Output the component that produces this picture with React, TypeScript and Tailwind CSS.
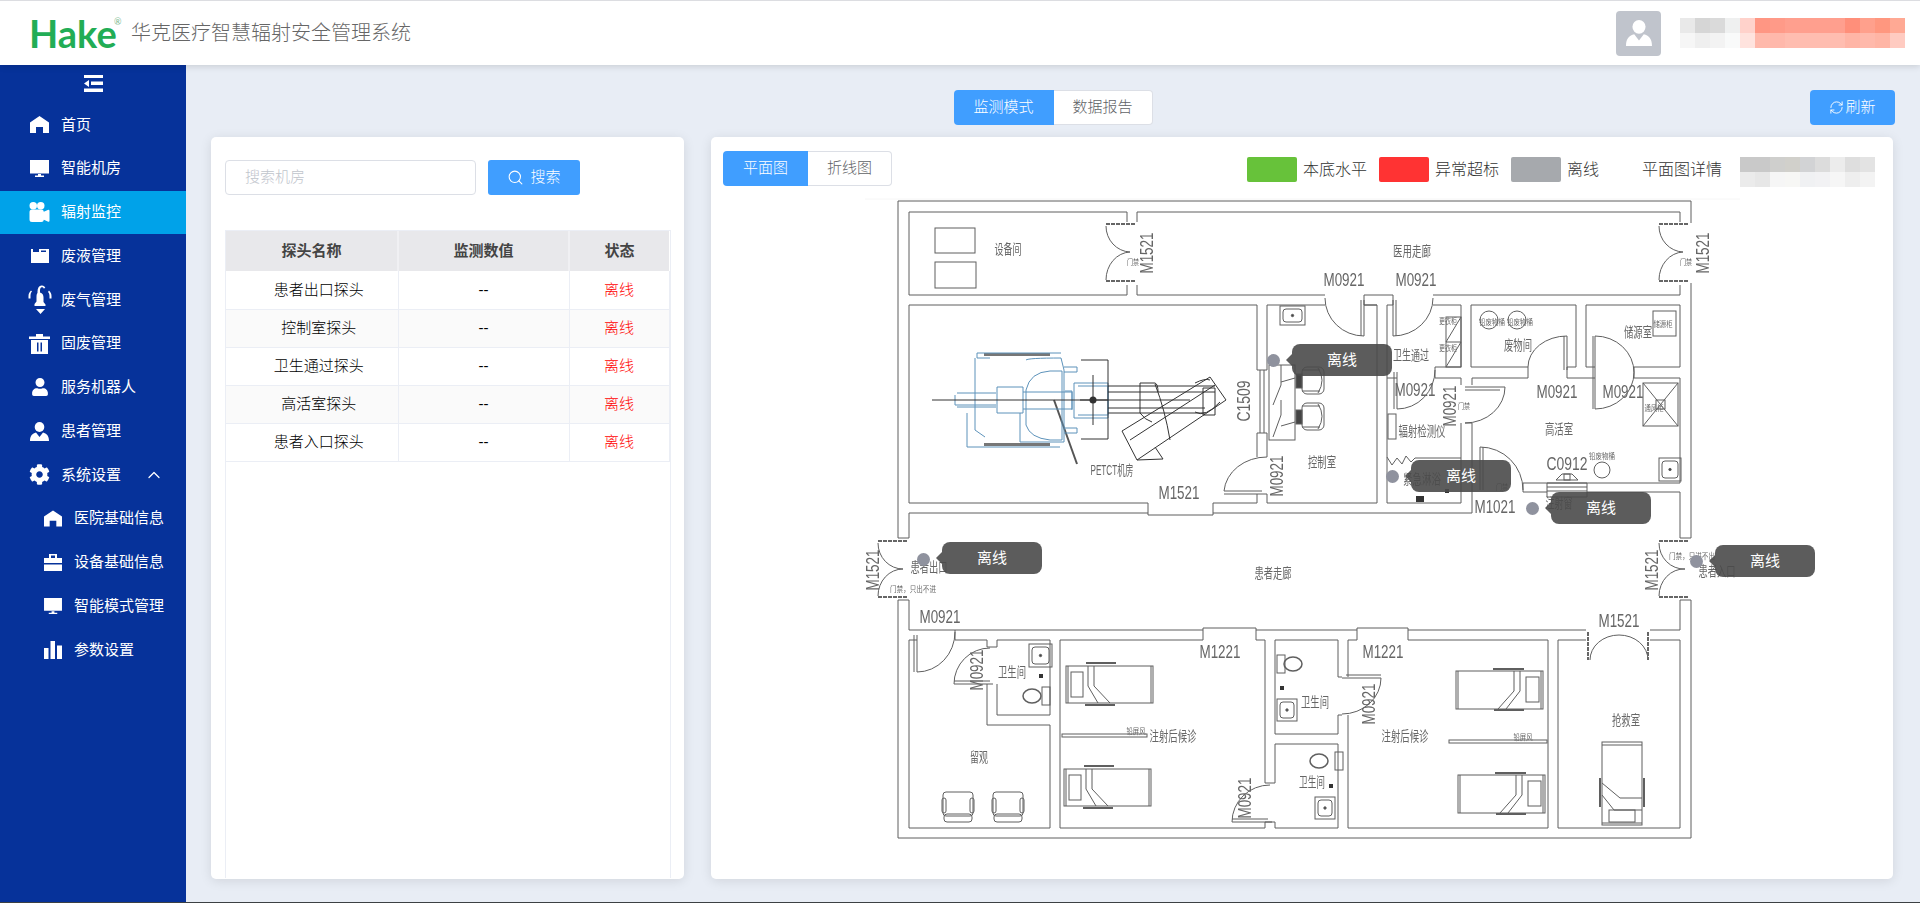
import { ChevronUp, RefreshCw, Search } from "lucide-react";
import { BsCameraReelsFill } from "react-icons/bs";
import { FaCog, FaUser } from "react-icons/fa";

type IconProps = { className?: string };

function HomeIcon({ className }: IconProps) {
  return (
    <svg viewBox="0 0 19 17" className={className} fill="currentColor">
      <path d="M9.500 0L19 6.500V17h-6v-6H6v6H0V6.500z" />
    </svg>
  );
}

function MonitorIcon({ className }: IconProps) {
  return (
    <svg viewBox="0 0 19 18" className={className} fill="currentColor">
      <path d="M0 0h19v13.500H0zM8 14h3v1.500h3V17H5v-1.500h3z" />
    </svg>
  );
}

function BoxIcon({ className }: IconProps) {
  return (
    <svg viewBox="0 0 18 14" className={className} fill="currentColor">
      <path d="M0 0h2v3h6V0h10v14H0zM10 1.500v1.500h5V1.500z" />
    </svg>
  );
}

function BellIcon({ className }: IconProps) {
  return (
    <svg viewBox="0 0 24 30" className={className} fill="currentColor">
      <path d="M9.500 6.500C9.500 3 11 .8 13.500.5c2 -.2 3.300 .8 3.800 2.500l-1.600 .6c-.4 -1 -1 -1.400 -2 -1.300-1 .2-1.700 1.200-1.700 3.200v2c2.500 .6 3.500 2.500 3.500 5v4.500l2 2.500v1.500H6.500V19l2 -2.500V12c0 -2.500 .5 -3.500 1 -4zM8 24h9l-4.500 5zM.5 11c0 -2.500 1 -4 2.500 -5.500l1 1c-1 1-1.500 2.500-1.500 4v3H.5zM21 5.500c1.500 1.500 2.500 3 2.500 5.500v2.500h-2V11c0 -1.500-.5-3-1.500-4z" />
    </svg>
  );
}

function TrashIcon({ className }: IconProps) {
  return (
    <svg viewBox="0 0 21 20" className={className} fill="currentColor">
      <path d="M7 0h7v2.500h7v2.500H0V2.500h7zM2 6h17v14H2zM8 8.500v9h1.500v-9zM11.500 8.500v9H13v-9z" fillRule="evenodd" />
    </svg>
  );
}

function PatientIcon({ className }: IconProps) {
  return (
    <svg viewBox="0 0 19 19" className={className} fill="currentColor">
      <ellipse cx="9.500" cy="5" rx="4.800" ry="5" />
      <path d="M6 10.500L9.500 15L13 10.500C16.500 11.500 19 13.500 19 19H0C0 13.500 2.500 11.500 6 10.500z" />
    </svg>
  );
}

function CaseIcon({ className }: IconProps) {
  return (
    <svg viewBox="0 0 18 17" className={className} fill="currentColor">
      <path d="M5 0h8v4h5v5H0V4h5zM7 1.500V4h4V1.500zM0 10.500h18V17H0z" fillRule="evenodd" />
    </svg>
  );
}

function BarsIcon({ className }: IconProps) {
  return (
    <svg viewBox="0 0 18 18" className={className} fill="currentColor">
      <path d="M0 7h4.500v11H0zM6.500 0H11v18H6.500zM13 4.500h5V18h-5z" />
    </svg>
  );
}

function OutdentIcon({ className }: IconProps) {
  return (
    <svg viewBox="0 0 19 17" className={className} fill="currentColor">
      <path d="M0 0h19v3H0zM7 6.500h12v3.500H7zM0 13.500h19V17H0zM5 5v7L0 8.500z" />
    </svg>
  );
}

const menu = [
  { label: "首页", icon: <HomeIcon className="w-[19px] h-[17px]" /> },
  { label: "智能机房", icon: <MonitorIcon className="w-[19px] h-[18px]" /> },
  { label: "辐射监控", icon: <BsCameraReelsFill className="w-[21px] h-[20px]" />, active: true },
  { label: "废液管理", icon: <BoxIcon className="w-[18px] h-[14px]" /> },
  { label: "废气管理", icon: <BellIcon className="w-[24px] h-[30px]" /> },
  { label: "固废管理", icon: <TrashIcon className="w-[21px] h-[20px]" /> },
  { label: "服务机器人", icon: <FaUser className="w-[18px] h-[18px]" /> },
  { label: "患者管理", icon: <PatientIcon className="w-[19px] h-[19px]" /> },
  { label: "系统设置", icon: <FaCog className="w-[21px] h-[21px]" />, open: true },
];

const subMenu = [
  { label: "医院基础信息", icon: <HomeIcon className="w-[18px] h-[17px]" /> },
  { label: "设备基础信息", icon: <CaseIcon className="w-[18px] h-[17px]" /> },
  { label: "智能模式管理", icon: <MonitorIcon className="w-[18px] h-[17px]" /> },
  { label: "参数设置", icon: <BarsIcon className="w-[18px] h-[18px]" /> },
];

const probes = ["患者出口探头", "控制室探头", "卫生通过探头", "高活室探头", "患者入口探头"];

const headerMosaic = [
  "bg-[#e9e9e9]", "bg-[#d6d6d6]", "bg-[#dadada]", "bg-[#eff0f0]", "bg-[#ffd2cb]", "bg-[#ff9683]", "bg-[#ff9a88]", "bg-[#ff9f8e]",
  "bg-[#ff9f8e]", "bg-[#ff9f8e]", "bg-[#ff9f8e]", "bg-[#ff8f7a]", "bg-[#ffa08c]", "bg-[#ff977f]", "bg-[#ffa994]",
  "bg-[#f6f6f6]", "bg-[#efefef]", "bg-[#f3f3f3]", "bg-[#f9fafa]", "bg-[#ffe3de]", "bg-[#ffb9ab]", "bg-[#ffb8ab]", "bg-[#ffbdb0]",
  "bg-[#ffbdb0]", "bg-[#ffbdb0]", "bg-[#ffbdb0]", "bg-[#ffb5a6]", "bg-[#ffb9ab]", "bg-[#ffb5a5]", "bg-[#ffcbc1]",
];

const planMosaic = [
  "bg-[#c9c9c9]", "bg-[#c9c9c9]", "bg-[#cfcfcd]", "bg-[#d1d0cb]", "bg-[#d2d3d5]", "bg-[#dcdcdc]", "bg-[#ececec]", "bg-[#dedede]", "bg-[#e3e3e3]",
  "bg-[#ebebeb]", "bg-[#e7e7e7]", "bg-[#f6f6f6]", "bg-[#f7f7f5]", "bg-[#f0f1f3]", "bg-[#f2f2f4]", "bg-[#f6f6f6]", "bg-[#eeeeee]", "bg-[#f3f3f3]",
];

// floor plan coordinates are screen pixels, the svg viewBox starts at 860,195
const PLAN_X = 860;
const PLAN_Y = 195;

const walls = [
  "M898 538V201H1691V223M1691 283V538M898 600V838H1691V600",
  "M1127 222V212H909V295H1127V285M1137 222V212H1680V222M1137 285V295H1325M1680 285V295H1433",
  "M1364 295H1393M1364 295V305H1377M1393 295V305H1387",
  "M1257 370V305H909V503H1148V515H1213V503H1257V494M1257 457V433",
  "M1267 370V305H1325M1364 305H1377V503H1267V494M1267 457V433",
  "M1257 370H1267M1257 433H1267M1260 370V433M1264 370V433",
  "M1387 305V503H1461V423M1387 378H1397M1433 305H1461V367H1435V378H1461V385",
  "M1148 513H909V538H898M1213 513H1472V423M1472 385V378H1528V367H1471V305H1576V367H1567V378H1595M1634 378H1680V483H1523V492H1547M1587 492H1680V538H1691",
  "M1595 367H1586V305H1680V367H1634V378",
  "M909 600V630H955M898 600H909M955 630H1203V628H1256V630H1357V628H1408V630H1586M1650 630H1680V600H1691",
  "M917 640H909V828H1050V725H987V684M955 630V640H987V647H997V640H1050V715H997V684",
  "M1060 640H1203V630M1256 630V640H1265V783H1275V744H1338V828H1275V822H1265V828H1060V640",
  "M1275 734V640H1338V677H1342M1275 734H1338V715H1342M1348 677V640H1357V630M1408 630V640H1548V828H1348V715",
  "M1586 640H1558V828H1680V640H1650",
];

const doors = [
  "M1224 494H1267M1224 491H1262M1224 491A43 37 0 0 1 1267 457",
  "M1364 300V336M1361 300V336M1364 336A39 38 0 0 1 1325 298",
  "M1393 300V336M1396 300V336M1393 336A40 38 0 0 0 1433 298",
  "M1397 372V409M1394 372V409M1397 409A38 39 0 0 0 1435 370",
  "M1465 387H1505M1465 390H1500M1505 387A40 36 0 0 1 1465 423H1472",
  "M1567 336V370M1564 336V370M1567 336A39 31 0 0 0 1528 367",
  "M1595 336V409M1593 336V409M1595 336A39 36.500 0 0 1 1595 409",
  "M1480 447V490M1483 447V490M1480 447A43 43 0 0 1 1523 490",
  "M1106 226A25 26 0 0 0 1130 252M1106 280A25 28 0 0 1 1130 252",
  "M1659 226A25 26 0 0 0 1683 252M1659 280A25 28 0 0 1 1683 252",
  "M878 543A25 26 0 0 0 903 569M878 596A25 27 0 0 1 903 569",
  "M1659 543A25 26 0 0 0 1685 569M1659 596A25 27 0 0 1 1685 569",
  "M1590 660A29 25 0 0 1 1619 635M1648 660A29 25 0 0 0 1619 635",
  "M954 684H993M954 681H990M954 684A36 36 0 0 1 990 648",
  "M917 635V672M914 635V672M917 672A38 40 0 0 0 955 632",
  "M1232 822H1272M1232 819H1268M1232 822A38 37 0 0 1 1270 785",
  "M1342 678H1381M1346 675H1381M1381 678A39 36 0 0 1 1342 714",
];

const hatches = [
  "M1106 224H1135M1106 281H1135M1659 224H1688M1659 281H1688",
  "M878 541H907M878 597H907M1659 541H1689M1659 597H1689",
  "M1588 632V660M1648 632V660",
];

const petBlue = [
  "M990 358H977V353H1061M975 358V430L985 437M967 413V447H1060",
  "M1026 360Q1028 358 1061 358L1064 370V442H1020V413M1026 390Q1030 372 1050 371H1062V440H1050Q1030 438 1026 425V390",
  "M957 393H996M957 407H996M955 395V405H996M997 387H1023V413H997ZM1023 392H1072V409H1023M1065 391H1072V410",
  "M1064 367H1077V372H1064M1064 428H1077V433H1064M1074 383H1108V418H1074ZM1078 386H1108V415H1078",
];

const petBlack = [
  "M932 400H1190M1081 360H1108V439H1081M1093 375V425M1080 400H1108",
  "M1108 386H1215M1108 392H1215M1108 408H1205M1108 413H1205",
  "M1140 383H1155Q1158 384 1158 392M1140 383V413Q1145 420 1152 422",
  "M1122 431L1210 377L1226 400L1137 460ZM1130 440L1215 385M1155 447L1163 459L1137 460",
  "M1155 384Q1165 410 1170 440M1203 388H1215V415H1203ZM1195 383Q1205 378 1210 380M1195 412Q1205 418 1220 402",
];

const labels: [string, number, number, number, number][] = [
  ["设备间", 1008, 249, 27, 14],
  ["医用走廊", 1412, 251, 38, 14],
  ["PETCT机房", 1112, 470, 43, 14],
  ["控制室", 1322, 462, 28, 14],
  ["卫生通过", 1411, 355, 36, 14],
  ["废物间", 1518, 345, 28, 14],
  ["储源室", 1638, 332, 28, 14],
  ["辐射检测仪", 1422, 431, 47, 14],
  ["高活室", 1559, 429, 28, 14],
  ["紧急淋浴", 1422, 479, 38, 14],
  ["注射窗", 1559, 503, 27, 14],
  ["患者出口", 929, 567, 37, 14],
  ["患者入口", 1717, 571, 37, 14],
  ["患者走廊", 1273, 573, 37, 14],
  ["卫生间", 1012, 672, 28, 14],
  ["留观", 979, 757, 18, 14],
  ["注射后候诊", 1173, 736, 47, 14],
  ["注射后候诊", 1405, 736, 47, 14],
  ["卫生间", 1315, 702, 28, 14],
  ["卫生间", 1312, 782, 26, 14],
  ["抢救室", 1626, 720, 28, 14],
  ["门禁", 1133, 262, 12, 8],
  ["门禁", 1686, 262, 12, 8],
  ["更衣柜", 1448, 321, 18, 8],
  ["更衣柜", 1448, 348, 18, 8],
  ["铅废物桶", 1492, 322, 26, 8],
  ["铅废物桶", 1520, 322, 26, 8],
  ["储源柜", 1663, 324, 19, 8],
  ["门禁", 1464, 406, 12, 8],
  ["通风柜", 1654, 408, 19, 8],
  ["铅废物桶", 1602, 456, 26, 8],
  ["门禁", 1502, 487, 12, 8],
  ["门禁，只出不进", 913, 589, 46, 8],
  ["门禁，只进不出", 1692, 556, 46, 8],
  ["铅屏风", 1136, 731, 19, 8],
  ["铅屏风", 1523, 737, 19, 8],
];

const codes: [string, number, number, number?][] = [
  ["M1521", 1147, 253, -90],
  ["M1521", 1703, 253, -90],
  ["M0921", 1344, 280],
  ["M0921", 1416, 280],
  ["M1521", 1179, 493],
  ["C1509", 1244, 401, -90],
  ["M0921", 1277, 476, -90],
  ["M0921", 1415, 390],
  ["M0921", 1450, 406, -90],
  ["M0921", 1557, 392],
  ["M0921", 1623, 392],
  ["C0912", 1567, 464],
  ["M1021", 1495, 507],
  ["M1521", 873, 570, -90],
  ["M1521", 1652, 570, -90],
  ["M0921", 940, 617],
  ["M1221", 1220, 652],
  ["M1221", 1383, 652],
  ["M0921", 977, 670, -90],
  ["M0921", 1245, 798, -90],
  ["M0921", 1369, 704, -90],
  ["M1521", 1619, 621],
];

const beds = [
  { x: 1066, y: 666, flip: false },
  { x: 1064, y: 769, flip: false },
  { x: 1456, y: 671, flip: true },
  { x: 1458, y: 775, flip: true },
];

const sinks = [
  [1029, 644, 23, 23],
  [1277, 699, 20, 22],
  [1315, 797, 20, 22],
  [1659, 458, 22, 23],
  [1280, 306, 25, 19],
];

const toilets = [
  { cx: 1032, cy: 696, tx: 1042, ty: 687 },
  { cx: 1293, cy: 664, tx: 1277, ty: 655 },
  { cx: 1319, cy: 761, tx: 1335, ty: 752 },
];

const markers = [
  { dotX: 1273, dotY: 360, tipX: 1292, tipY: 344 },
  { dotX: 1392, dotY: 476, tipX: 1411, tipY: 460 },
  { dotX: 1532, dotY: 508, tipX: 1551, tipY: 492 },
  { dotX: 923, dotY: 559, tipX: 942, tipY: 542 },
  { dotX: 1696, dotY: 561, tipX: 1715, tipY: 545 },
];

function Chair({ x, y }: { x: number; y: number }) {
  return (
    <g>
      <rect x={x} y={y} width="30" height="24" rx="3" />
      <rect x={x + 1} y={y + 22} width="28" height="8" rx="3" />
      <rect x={x - 1} y={y + 6} width="4" height="15" rx="2" />
      <rect x={x + 27} y={y + 6} width="4" height="15" rx="2" />
    </g>
  );
}

function OfficeChair({ y }: { y: number }) {
  return (
    <g>
      <rect x="1302" y={y} width="22" height="27" rx="5" />
      <path d={`M1318 ${y + 1}Q1326 ${y + 13} 1318 ${y + 26}M1302 ${y + 3}h18M1302 ${y + 24}h18`} />
      <rect x="1296" y={y + 7} width="6" height="14" fill="#444" />
    </g>
  );
}

function FloorPlan() {
  return (
    <svg
      viewBox={`${PLAN_X} ${PLAN_Y} 880 650`}
      width="880"
      height="650"
      fill="none"
      className="blur-[0.35px] font-normal"
    >
      <path d="M865 199H1740" stroke="#f6f6f6" />
      <g stroke="#5f5f5f" strokeWidth="1">
        {walls.map((d) => (
          <path key={d} d={d} />
        ))}
        {doors.map((d) => (
          <path key={d} d={d} />
        ))}
        <rect x="935" y="228" width="40" height="25" />
        <rect x="935" y="262" width="41" height="26" />
        {beds.map((b) =>
          b.flip ? (
            <g key={b.x + b.y}>
              <rect x={b.x} y={b.y} width="87" height="38" />
              <path d={`M${b.x + 2} ${b.y}v38M${b.x + 85} ${b.y}v38`} />
              <rect x={b.x + 70} y={b.y + 6} width="13" height="25" />
              <path
                d={`M${b.x + 64} ${b.y}v20L${b.x + 50} ${b.y + 38}M${b.x + 58} ${b.y}v20L${b.x + 42} ${b.y + 38}`}
              />
              <path d={`M${b.x + 37} ${b.y - 2}h31M${b.x + 38} ${b.y + 39}h30`} strokeWidth="2" />
            </g>
          ) : (
            <g key={b.x + b.y}>
              <rect x={b.x} y={b.y} width="87" height="37" />
              <path d={`M${b.x + 2} ${b.y}v37M${b.x + 85} ${b.y}v37`} />
              <rect x={b.x + 5} y={b.y + 6} width="12" height="25" />
              <path
                d={`M${b.x + 22} ${b.y}v20L${b.x + 32} ${b.y + 37}M${b.x + 28} ${b.y}v20L${b.x + 44} ${b.y + 37}`}
              />
              <path d={`M${b.x + 20} ${b.y - 3}h30M${b.x + 19} ${b.y + 39}h30`} strokeWidth="2" />
            </g>
          )
        )}
        <rect x="1602" y="742" width="40" height="83" />
        <rect x="1609" y="810" width="26" height="12" />
        <path d="M1602 745h40M1602 823h40M1602 783L1620 798H1642M1602 795L1614 810H1642" />
        <path d="M1600 778v29M1644 778v29" strokeWidth="2" />
        <rect x="1062" y="734" width="85" height="3" />
        <rect x="1449" y="740" width="98" height="3" />
        {sinks.map(([x, y, w, h]) => (
          <g key={x + y}>
            <rect x={x} y={y} width={w} height={h} />
            <rect x={x + 3} y={y + 3} width={w - 6} height={h - 6} rx="3" />
            <circle cx={x + w / 2} cy={y + h / 2} r="1.200" fill="#444" />
          </g>
        ))}
        {toilets.map((t) => (
          <g key={t.cx}>
            <ellipse cx={t.cx} cy={t.cy} rx="9" ry="7" strokeWidth="1.500" />
            <rect x={t.tx} y={t.ty} width="8" height="18" />
          </g>
        ))}
        <rect x="1643" y="383" width="35" height="43" />
        <rect x="1656" y="400" width="9" height="9" />
        <path d="M1643 383L1678 426M1678 383L1643 426" />
        <rect x="1653" y="311" width="23" height="25" />
        <rect x="1446" y="317" width="15" height="50" />
        <path d="M1446 342L1461 317M1446 367L1461 342M1446 342H1461" />
        <circle cx="1489" cy="320" r="9" />
        <circle cx="1517" cy="320" r="9" />
        <circle cx="1602" cy="470" r="8" />
        <rect x="1388" y="414" width="8" height="25" />
        <path d="M1387 457L1392 465L1397 458L1402 464L1406 456L1411 462L1415 458H1461" />
        <path d="M1547 483H1587V497H1547ZM1547 487H1587M1547 491H1587M1556 480L1562 474H1572L1578 480Z" />
        <rect x="1564" y="474" width="6" height="6" />
        <rect x="1269" y="365" width="26" height="75" />
        <path d="M1273 405L1281 385V365M1273 437L1281 415V400M1281 382L1295 378M1281 426L1295 422" />
        <OfficeChair y={367} />
        <OfficeChair y={403} />
        <Chair x={943} y={792} />
        <Chair x={993} y={792} />
      </g>
      <g stroke="#666" strokeWidth="2" strokeDasharray="4 1">
        {hatches.map((d) => (
          <path key={d} d={d} />
        ))}
      </g>
      <path d="M1054 400L1077 464" stroke="#555" strokeWidth="2" />
      <g fill="#333">
        <rect x="984" y="353" width="66" height="3" fill="#777" />
        <rect x="984" y="443" width="66" height="3" fill="#777" />
        <circle cx="1093" cy="400" r="3.500" />
        <rect x="1039" y="674" width="4" height="4" />
        <rect x="1280" y="686" width="4" height="4" />
        <rect x="1329" y="784" width="4" height="4" />
        <rect x="1445" y="489" width="4" height="4" />
        <rect x="1416" y="496" width="8" height="6" />
      </g>
      <g stroke="#5c92ba" strokeWidth="1">
        {petBlue.map((d) => (
          <path key={d} d={d} />
        ))}
      </g>
      <g stroke="#333" strokeWidth="1">
        {petBlack.map((d) => (
          <path key={d} d={d} />
        ))}
      </g>
      <g fill="#666" textAnchor="middle" dominantBaseline="central">
        {labels.map(([text, x, y, w, size], i) => (
          <text key={i} x={x} y={y} fontSize={size} textLength={w} lengthAdjust="spacingAndGlyphs">
            {text}
          </text>
        ))}
      </g>
      <g
        fill="#666"
        textAnchor="middle"
        dominantBaseline="central"
        className="font-['Liberation_Sans',sans-serif]"
      >
        {codes.map(([text, x, y, rot], i) => (
          <text
            key={i}
            x={x}
            y={y}
            fontSize="18"
            textLength="41"
            lengthAdjust="spacingAndGlyphs"
            transform={rot ? `rotate(${rot} ${x} ${y})` : undefined}
          >
            {text}
          </text>
        ))}
      </g>
    </svg>
  );
}

function Sidebar() {
  return (
    <aside className="w-[186px] shrink-0 bg-[#06329a] text-white font-normal">
      <div className="h-[38px] flex items-start justify-center pt-[10px]">
        <OutdentIcon className="w-[19px] h-[17px]" />
      </div>
      {menu.map((item) => (
        <div
          key={item.label}
          className={`h-[43.75px] flex items-center text-[15px] ${item.active ? "bg-[#00a2e9]" : ""}`}
        >
          <span className="w-[61px] pl-[20px] flex justify-center shrink-0 pr-[2px]">{item.icon}</span>
          <span>{item.label}</span>
          {item.open && <ChevronUp className="w-[20px] h-[20px] ml-[23px]" strokeWidth={1.5} />}
        </div>
      ))}
      {subMenu.map((item) => (
        <div key={item.label} className="h-[43.75px] flex items-center text-[15px]">
          <span className="w-[74px] pl-[44px] shrink-0">{item.icon}</span>
          <span>{item.label}</span>
        </div>
      ))}
    </aside>
  );
}

function ProbePanel() {
  return (
    <section className="w-[473px] shrink-0 bg-white rounded-[5px] shadow-[0_2px_12px_rgba(0,0,0,0.1)] pt-[23px] pl-[14px] pr-[13px] pb-px flex flex-col">
      <div className="flex gap-[12px] h-[35px]">
        <div className="w-[251px] border border-[#dcdfe6] rounded-[4px] pl-[19px] flex items-center text-[15px] text-[#c0c4cc]">
          搜索机房
        </div>
        <button className="w-[92px] bg-[#409eff] rounded-[3px] text-white text-[15px] flex items-center justify-center gap-[6px]">
          <Search className="w-[17px] h-[17px]" strokeWidth={1.5} />
          搜索
        </button>
      </div>
      <div className="mt-[35px] flex-1 border-x border-t border-[#ebeef5]">
        <table className="table-fixed w-[443px] border-collapse text-[15px]">
          <thead>
            <tr className="h-[40px] bg-[#e8e8eb] text-[#444] font-bold">
              <th className="w-[172px] border-r-2 border-[#f0f0f3]">探头名称</th>
              <th className="w-[171px] border-r-2 border-[#f0f0f3]">监测数值</th>
              <th className="w-[100px]">状态</th>
            </tr>
          </thead>
          <tbody>
            {probes.map((name, i) => (
              <tr key={name} className={`h-[38px] border-b border-[#ebeef5] ${i % 2 === 1 ? "bg-[#fafafa]" : ""}`}>
                <td className="border-r border-[#ebeef5] text-center text-black pl-[14px]">{name}</td>
                <td className="border-r border-[#ebeef5] text-center text-black">--</td>
                <td className="border-r border-[#ebeef5] text-center text-[#ff0000]">离线</td>
              </tr>
            ))}
          </tbody>
        </table>
      </div>
    </section>
  );
}

function LegendItem({ color, label }: { color: string; label: string }) {
  return (
    <div className="flex items-center gap-[6px] text-[16px] text-[#333]">
      <span className={`w-[50px] h-[25px] rounded-[2px] ${color}`} />
      {label}
    </div>
  );
}

function PlanPanel() {
  return (
    <section className="flex-1 bg-white rounded-[5px] shadow-[0_2px_12px_rgba(0,0,0,0.1)] pt-[14px] pl-[12px] overflow-hidden">
      <div className="flex items-start h-[44px]">
        <div className="flex h-[35px] text-[15px]">
          <div className="w-[85px] bg-[#409eff] text-white rounded-l-[4px] flex items-center justify-center">
            平面图
          </div>
          <div className="w-[84px] border border-l-0 border-[#dcdfe6] text-[#606266] rounded-r-[4px] flex items-center justify-center">
            折线图
          </div>
        </div>
        <div className="flex items-center mt-[6px] ml-[355px] gap-[12px]">
          <LegendItem color="bg-[#67c23a]" label="本底水平" />
          <LegendItem color="bg-[#ff3333]" label="异常超标" />
          <LegendItem color="bg-[#a6a9ad]" label="离线" />
        </div>
        <span className="mt-[6px] ml-[43px] text-[16px] text-[#333] leading-[25px]">平面图详情</span>
        <div className="mt-[6px] ml-[18px] grid grid-cols-[repeat(9,15px)] grid-rows-[15px_15px]">
          {planMosaic.map((c, i) => (
            <span key={i} className={c} />
          ))}
        </div>
      </div>
      <div className="relative ml-[137px] w-[880px] h-[650px]">
        <FloorPlan />
        {markers.map((m) => (
          <div key={m.tipX}>
            <span
              className="absolute w-[13px] h-[13px] rounded-full bg-[#8f929e]"
              style={{ left: m.dotX - PLAN_X - 6.5, top: m.dotY - PLAN_Y - 6.5 }}
            />
            <div
              className="absolute w-[100px] h-[32px] rounded-[8px] bg-[#4a4a4a]/90 text-white text-[15px] font-normal flex items-center justify-center"
              style={{ left: m.tipX - PLAN_X, top: m.tipY - PLAN_Y }}
            >
              <span className="absolute -left-[6px] top-[10px] border-y-[6px] border-r-[6px] border-y-transparent border-r-[#4a4a4a]/90" />
              离线
            </div>
          </div>
        ))}
      </div>
    </section>
  );
}

export default function App() {
  return (
    <div className="h-[903px] w-[1920px] overflow-hidden flex flex-col bg-[#e8edf5] font-light font-['Liberation_Sans','Noto_Sans_CJK_SC',sans-serif]">
      <header className="relative z-10 h-[65px] shrink-0 bg-white border-t border-[#dcdde1] shadow-[0_2px_6px_rgba(0,0,0,0.12)] flex items-center pl-[29px]">
        <span className="relative font-['Lato',sans-serif] font-bold text-[38px] leading-none tracking-[0px] text-[#22ad55] w-[102px]">
          Hake
          <span className="absolute left-[85px] top-[3px] text-[9px] font-normal text-[#7bb98f]">®</span>
        </span>
        <span className="text-[20px] text-[#666]">华克医疗智慧辐射安全管理系统</span>
        <div className="ml-auto flex items-center gap-[19px] pr-[15px]">
          <div className="w-[45px] h-[45px] bg-[#c0c4cc] rounded-[4px] flex items-end justify-center pb-[10px]">
            <PatientIcon className="w-[26px] h-[26px] text-white" />
          </div>
          <div className="grid grid-cols-[repeat(15,15px)] grid-rows-[15px_15px]">
            {headerMosaic.map((c, i) => (
              <span key={i} className={c} />
            ))}
          </div>
        </div>
      </header>
      <div className="flex flex-1 min-h-0">
        <Sidebar />
        <main className="flex-1 min-w-0 flex flex-col pt-[25px] pb-[23px] pl-[25px] pr-[27px]">
          <div className="grid grid-cols-[1fr_auto_1fr] h-[35px] mb-[12px] mr-[-2px]">
            <div />
            <div className="flex text-[15px]">
              <div className="w-[100px] bg-[#409eff] text-white rounded-l-[4px] flex items-center justify-center">
                监测模式
              </div>
              <div className="w-[99px] bg-white border border-l-0 border-[#dcdfe6] text-[#606266] rounded-r-[4px] flex items-center justify-center">
                数据报告
              </div>
            </div>
            <button className="justify-self-end w-[85px] bg-[#409eff] rounded-[4px] text-white text-[15px] flex items-center justify-center gap-px">
              <RefreshCw className="w-[15px] h-[15px]" strokeWidth={1.5} />
              刷新
            </button>
          </div>
          <div className="flex flex-1 min-h-0 gap-[27px]">
            <ProbePanel />
            <PlanPanel />
          </div>
        </main>
      </div>
      <div className="h-px shrink-0 bg-[#3c4043]" />
    </div>
  );
}
